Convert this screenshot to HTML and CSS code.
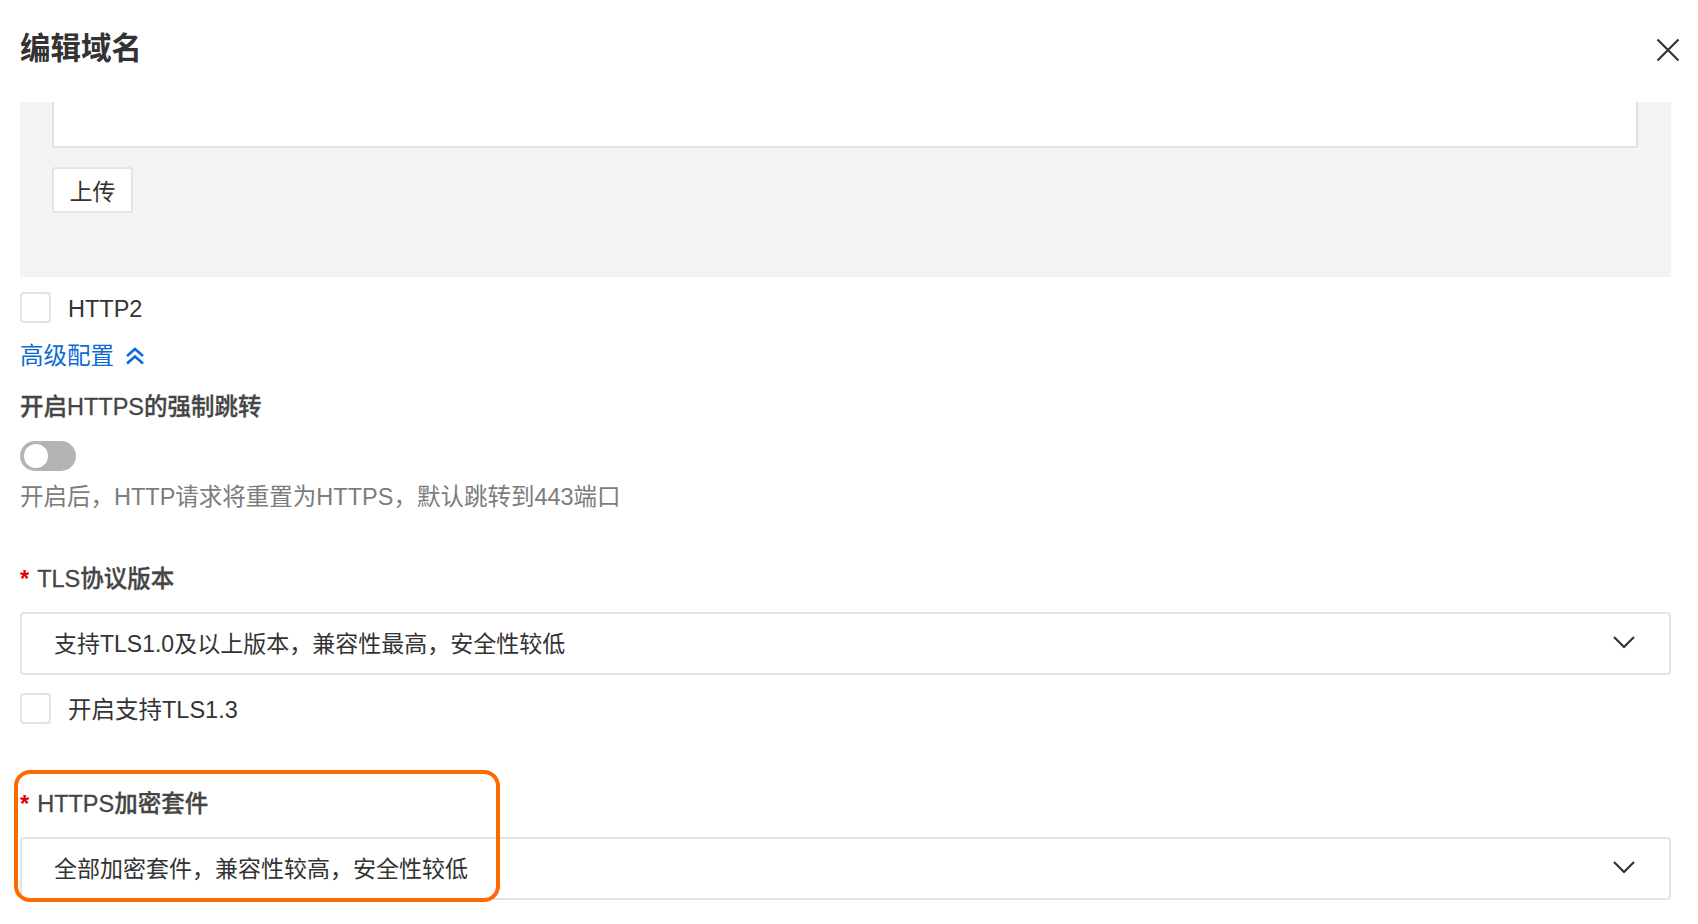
FILE: index.html
```html
<!DOCTYPE html>
<html lang="zh-CN">
<head>
  <meta charset="UTF-8">
  <title>编辑域名</title>
  <link rel="stylesheet" href="styles.css">
</head>
<body>
  <div class="drawer">
    <!-- Header -->
    <div class="drawer-header">
      <h1 class="drawer-title">编辑域名</h1>
      <span class="close-btn">
        <svg width="24" height="24" viewBox="0 0 24 24"><path d="M1.5 1.5 L22.5 22.5 M22.5 1.5 L1.5 22.5" stroke="#333" stroke-width="2.2" fill="none"/></svg>
      </span>
    </div>

    <!-- Scroll body -->
    <div class="drawer-body">
      <!-- Certificate panel (scrolled) -->
      <div class="cert-panel">
        <div class="cert-text"></div>
        <button class="upload-btn">上传</button>
      </div>

      <label class="check-row first">
        <span class="checkbox"></span>
        <span class="check-text">HTTP2</span>
      </label>

      <a class="adv-link">高级配置
        <svg width="22" height="18" viewBox="0 0 22 18"><path d="M3 9 L11 2 L19 9 M3 16.5 L11 9.5 L19 16.5" stroke="#0b6cd3" stroke-width="2.6" fill="none"/></svg>
      </a>

      <div class="form-item">
        <div class="item-label">开启HTTPS的强制跳转</div>
        <div class="switch"><span class="switch-knob"></span></div>
        <div class="help">开启后，HTTP请求将重置为HTTPS，默认跳转到443端口</div>
      </div>

      <div class="form-item tls">
        <div class="item-label"><span class="req">*</span>TLS协议版本</div>
        <div class="select">
          <span>支持TLS1.0及以上版本，兼容性最高，安全性较低</span>
          <svg width="24" height="16" viewBox="0 0 24 16"><path d="M2 3 L12 13 L22 3" stroke="#333" stroke-width="2.2" fill="none"/></svg>
        </div>
        <label class="check-row">
          <span class="checkbox"></span>
          <span class="check-text">开启支持TLS1.3</span>
        </label>
      </div>

      <div class="form-item suite">
        <div class="highlight"></div>
        <div class="item-label"><span class="req">*</span>HTTPS加密套件</div>
        <div class="select">
          <span>全部加密套件，兼容性较高，安全性较低</span>
          <svg width="24" height="16" viewBox="0 0 24 16"><path d="M2 3 L12 13 L22 3" stroke="#333" stroke-width="2.2" fill="none"/></svg>
        </div>
      </div>
    </div>
  </div>
</body>
</html>
```

FILE: styles.css
```css
/* Base */
html, body {
  margin: 0;
  padding: 0;
  background: #ffffff;
}
body {
  font-family: "Liberation Sans", "Noto Sans CJK SC", sans-serif;
  font-size: 23.5px;
  color: #333333;
  overflow: hidden;
}
.drawer {
  width: 1698px;
  height: 924px;
  display: flex;
  flex-direction: column;
}

/* Header */
.drawer-header {
  height: 102px;
  flex: none;
  display: flex;
  align-items: flex-start;
  justify-content: space-between;
  padding: 0 18px 0 20px;
  box-sizing: border-box;
}
.drawer-title {
  margin: 27px 0 0 0;
  font-size: 30.5px;
  line-height: 42px;
  font-weight: 700;
  color: #333333;
}
.close-btn {
  margin-top: 38px;
  width: 24px;
  height: 24px;
}

/* Body */
.drawer-body {
  flex: 1;
  overflow: hidden;
  padding: 0 27px 0 20px;
}

/* Certificate panel */
.cert-panel {
  background: #f3f3f3;
  padding: 0 33px 64px 32px;
}
.cert-text {
  height: 44px;
  background: #ffffff;
  border: 2px solid #e2e2e2;
  border-top: none;
  border-radius: 0 0 3px 3px;
}
.upload-btn {
  display: block;
  margin-top: 19px;
  width: 81px;
  height: 46px;
  padding: 0;
  background: #ffffff;
  border: 2px solid #e4e4e4;
  border-radius: 3px;
  font-family: inherit;
  font-size: 23px;
  color: #333333;
}

/* Checkbox rows */
.check-row {
  display: flex;
  align-items: center;
  height: 31px;
  margin-top: 18px;
}
.check-row.first {
  margin-top: 15px;
}
.checkbox {
  width: 31px;
  height: 31px;
  box-sizing: border-box;
  border: 2px solid #e2e2e2;
  border-radius: 4px;
  background: #ffffff;
}
.check-text {
  margin-left: 17px;
  line-height: 32px;
  padding-top: 2px;
  color: #333333;
}

/* Advanced toggle link */
.adv-link {
  display: flex;
  align-items: center;
  gap: 10px;
  margin-top: 17px;
  line-height: 32px;
  color: #0b6cd3;
}

/* Form items */
.form-item {
  position: relative;
  margin-top: 19px;
}
.item-label {
  line-height: 32px;
  font-weight: 500;
  color: #454545;
  -webkit-text-stroke: 0.3px #454545;
}
.req {
  color: #e00000;
  font-weight: 700;
  margin-right: 8px;
  -webkit-text-stroke: 0;
}
.switch {
  width: 56px;
  height: 30px;
  margin-top: 18px;
  border-radius: 15px;
  background: #b3b3b3;
  position: relative;
}
.switch-knob {
  position: absolute;
  left: 4px;
  top: 3px;
  width: 24px;
  height: 24px;
  border-radius: 50%;
  background: #ffffff;
}
.help {
  margin-top: 10px;
  line-height: 32px;
  color: #7c7c7c;
}
.form-item.tls {
  margin-top: 50px;
}
.form-item.suite {
  margin-top: 64px;
}
.select {
  margin-top: 17px;
  height: 63px;
  box-sizing: border-box;
  border: 2px solid #e2e2e2;
  border-radius: 4px;
  padding: 0 33px 3px 32px;
  display: flex;
  align-items: center;
  justify-content: space-between;
  font-size: 23px;
  color: #333333;
}

/* Annotation highlight */
.highlight {
  position: absolute;
  left: -6px;
  top: -18px;
  width: 486px;
  height: 132px;
  box-sizing: border-box;
  border: 4px solid #ff6a00;
  border-radius: 16px;
  pointer-events: none;
}
```
